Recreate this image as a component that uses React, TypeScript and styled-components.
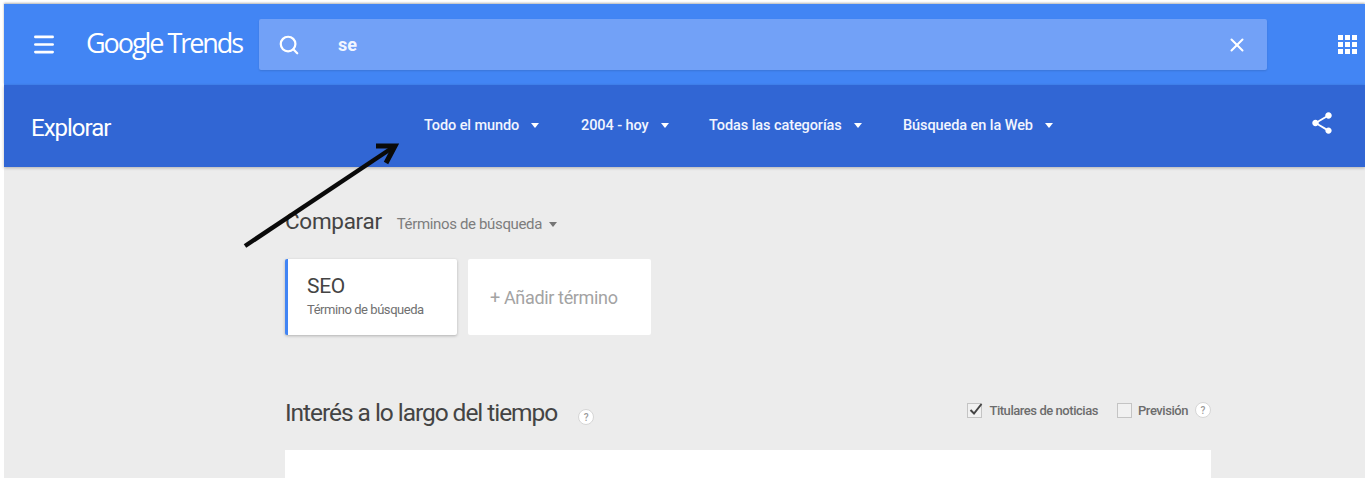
import { FC } from 'react'
import styled, { createGlobalStyle } from 'styled-components'
import { Search, X, Menu } from 'lucide-react'

const GlobalStyle = createGlobalStyle`
  html, body {
    margin: 0;
    padding: 0;
    height: 478px;
    overflow: hidden;
    background: #fff;
    font-family: Roboto, "Liberation Sans", sans-serif;
  }
`

const StyledPage = styled.div`
  position: relative;
  width: 1365px;
  height: 478px;
  padding: 4px 0 0 4px;
  box-sizing: border-box;
  overflow: hidden;
  display: flex;
  flex-direction: column;
`

const TopBar = styled.header`
  height: 81px;
  flex-shrink: 0;
  background: #4285f4;
  box-shadow: 0 -1px 2px rgb(0 0 0 / 0.3);
  display: flex;
  align-items: center;
  padding-left: 27px;
  color: #fff;
`

const MenuButton = styled.div`
  width: 26px;
  height: 26px;
  display: flex;
  align-items: center;
  justify-content: center;
`

const Logo = styled.div`
  margin-left: 29px;
  width: 173px;
  font-family: 'Open Sans', sans-serif;
  font-size: 27px;
  letter-spacing: -2.05px;
  font-weight: 400;
  white-space: nowrap;
  position: relative;
  top: -2px;
`

const SearchBox = styled.div`
  width: 1008px;
  height: 51px;
  background: #72a1f7;
  border-radius: 2px;
  box-shadow: 0 1px 2px rgb(0 0 0 / 0.12);
  display: flex;
  align-items: center;
  padding: 0 19px;
  box-sizing: border-box;
`

const SearchText = styled.span`
  flex: 1;
  margin-left: 38px;
  font-size: 18px;
  font-weight: 700;
  color: #f2f6ff;
`

const AppsGrid = styled.div`
  margin-left: 71px;
  width: 19px;
  height: 19px;
  display: grid;
  grid-template-columns: repeat(3, 5px);
  grid-template-rows: repeat(3, 5px);
  gap: 2px;
`

const AppsDot = styled.span`
  background: #fff;
`

const SubBar = styled.div`
  height: 82px;
  flex-shrink: 0;
  background: #3166d4;
  box-shadow: 0 1px 3px rgb(0 0 0 / 0.25);
  display: flex;
  align-items: center;
  padding-left: 27px;
  color: #fff;
  position: relative;
`

const PageTitle = styled.h1`
  margin: 0;
  width: 393px;
  font-size: 24px;
  font-weight: 400;
  letter-spacing: -1px;
  position: relative;
  top: 2px;
`

const Filters = styled.div`
  display: flex;
  align-items: center;
  flex: 1;
  position: relative;
  top: -1px;
`

const Filter = styled.div<{ $width: number }>`
  width: ${({ $width }) => $width}px;
  display: flex;
  align-items: center;
  font-size: 14.5px;
  font-weight: 500;
  letter-spacing: -0.08px;
  color: #f1f5ff;
  white-space: nowrap;
`

const Caret = styled.span<{ $color?: string; $gap?: number }>`
  margin-left: ${({ $gap }) => $gap ?? 12}px;
  width: 0;
  height: 0;
  border-left: 4.5px solid transparent;
  border-right: 4.5px solid transparent;
  border-top: 5px solid ${({ $color }) => $color ?? '#fff'};
`

const ShareButton = styled.div`
  margin-right: 30px;
  display: flex;
  position: relative;
  top: -3px;
`

const Content = styled.main`
  flex: 1;
  background: #ececec;
  padding: 41px 154px 0 281px;
  display: flex;
  flex-direction: column;
`

const CompareRow = styled.div`
  display: flex;
  align-items: baseline;
  height: 34px;
`

const CompareTitle = styled.h2`
  margin: 0;
  font-size: 22.5px;
  font-weight: 400;
  letter-spacing: -0.3px;
  color: #444;
`

const CompareType = styled.span`
  margin-left: 15px;
  font-size: 15px;
  letter-spacing: -0.35px;
  color: #7d7d7d;
  display: flex;
  align-items: center;
`

const TermRow = styled.div`
  display: flex;
  gap: 11px;
  margin-top: 17px;
`

const TermCard = styled.div`
  width: 150px;
  height: 62px;
  background: #fff;
  border-left: 3px solid #4285f4;
  border-radius: 2px;
  box-shadow: 0 1px 3px rgb(0 0 0 / 0.25);
  padding: 14px 0 0 19px;
`

const TermName = styled.div`
  font-size: 21px;
  line-height: 27px;
  color: #444;
  letter-spacing: -0.3px;
`

const TermKind = styled.div`
  font-size: 13px;
  line-height: 19px;
  color: #707070;
  letter-spacing: -0.45px;
`

const AddCard = styled.div`
  width: 183px;
  height: 76px;
  background: #fff;
  border-radius: 2px;
  display: flex;
  align-items: center;
  padding-left: 22px;
  box-sizing: border-box;
  font-size: 18px;
  letter-spacing: -0.35px;
  color: #a3a3a3;
`

const SectionHeader = styled.div`
  display: flex;
  align-items: center;
  height: 66px;
  margin-top: 49px;
`

const SectionTitle = styled.h2`
  margin: 0;
  font-size: 24.5px;
  font-weight: 400;
  letter-spacing: -1.05px;
  color: #444;
  position: relative;
  top: -5px;
`

const HelpIcon = styled.span<{ $gap?: number }>`
  margin-left: ${({ $gap }) => $gap ?? 21}px;
  width: 16px;
  height: 16px;
  border-radius: 50%;
  background: #fff;
  border: 1px solid #d6d6d6;
  box-sizing: border-box;
  color: #9a9a9a;
  font-size: 10px;
  font-weight: 500;
  display: flex;
  align-items: center;
  justify-content: center;
`

const Options = styled.div`
  margin-left: auto;
  display: flex;
  align-items: center;
  position: relative;
  top: -7px;
`

const CheckBox = styled.span`
  width: 15px;
  height: 15px;
  box-sizing: border-box;
  border: 1px solid #c4c4c4;
  background: #f1f1f1;
  position: relative;
  flex-shrink: 0;
`

const CheckMark = styled.svg`
  position: absolute;
  left: 0;
  top: -3px;
`

const OptionLabel = styled.span<{ $left?: number; $right?: number }>`
  margin-left: ${({ $left }) => $left ?? 7}px;
  margin-right: ${({ $right }) => $right ?? 0}px;
  font-size: 13px;
  font-weight: 500;
  color: #6c6c6c;
  letter-spacing: -0.45px;
  white-space: nowrap;
`

const ChartCard = styled.div`
  flex: 1;
  background: #fff;
`

const ArrowOverlay = styled.svg`
  position: absolute;
  left: 240px;
  top: 138px;
`

const filters = [
  { label: 'Todo el mundo', width: 157 },
  { label: '2004 - hoy', width: 128 },
  { label: 'Todas las categorías', width: 194 },
  { label: 'Búsqueda en la Web', width: 160 }
]

const App: FC = () => {
  return (
    <>
      <GlobalStyle />
      <StyledPage>
        <TopBar>
          <MenuButton>
            <Menu size={27} strokeWidth={2.4} color="#fff" />
          </MenuButton>
          <Logo>Google Trends</Logo>
          <SearchBox>
            <Search size={22} strokeWidth={2.4} color="#fff" />
            <SearchText>se</SearchText>
            <X size={22} strokeWidth={2.2} color="#fff" />
          </SearchBox>
          <AppsGrid>
            {Array.from({ length: 9 }).map((_, i) => (
              <AppsDot key={i} />
            ))}
          </AppsGrid>
        </TopBar>
        <SubBar>
          <PageTitle>Explorar</PageTitle>
          <Filters>
            {filters.map((filter) => (
              <Filter key={filter.label} $width={filter.width}>
                {filter.label}
                <Caret />
              </Filter>
            ))}
          </Filters>
          <ShareButton>
            <svg width="26" height="26" viewBox="0 0 24 24" fill="#fff">
              <path d="M18 16.08c-.76 0-1.44.3-1.96.77L8.91 12.7c.05-.23.09-.46.09-.7s-.04-.47-.09-.7l7.05-4.11c.54.5 1.25.81 2.04.81 1.66 0 3-1.34 3-3s-1.34-3-3-3-3 1.34-3 3c0 .24.04.47.09.7L8.04 9.81C7.5 9.31 6.79 9 6 9c-1.66 0-3 1.34-3 3s1.34 3 3 3c.79 0 1.5-.31 2.04-.81l7.12 4.16c-.05.21-.08.43-.08.65 0 1.61 1.31 2.92 2.92 2.92s2.92-1.31 2.92-2.92-1.31-2.92-2.92-2.92z" />
            </svg>
          </ShareButton>
        </SubBar>
        <Content>
          <CompareRow>
            <CompareTitle>Comparar</CompareTitle>
            <CompareType>
              Términos de búsqueda
              <Caret $color="#757575" $gap={7} />
            </CompareType>
          </CompareRow>
          <TermRow>
            <TermCard>
              <TermName>SEO</TermName>
              <TermKind>Término de búsqueda</TermKind>
            </TermCard>
            <AddCard>+ Añadir término</AddCard>
          </TermRow>
          <SectionHeader>
            <SectionTitle>Interés a lo largo del tiempo</SectionTitle>
            <HelpIcon>?</HelpIcon>
            <Options>
              <CheckBox>
                <CheckMark width="16" height="16" viewBox="0 0 16 16" fill="none">
                  <path d="M2.5 9 L6 12.5 L13.5 3" stroke="#444" strokeWidth="2" />
                </CheckMark>
              </CheckBox>
              <OptionLabel $right={19}>Titulares de noticias</OptionLabel>
              <CheckBox />
              <OptionLabel $left={6}>Previsión</OptionLabel>
              <HelpIcon $gap={7}>?</HelpIcon>
            </Options>
          </SectionHeader>
          <ChartCard />
        </Content>
        <ArrowOverlay width="170" height="120" viewBox="0 0 170 120" fill="none">
          <path d="M5 108 L152 10" stroke="#0a0a0a" strokeWidth="4.5" />
          <path d="M136 8 L155 8 L146 25" stroke="#0a0a0a" strokeWidth="5" />
        </ArrowOverlay>
      </StyledPage>
    </>
  )
}

export default App
